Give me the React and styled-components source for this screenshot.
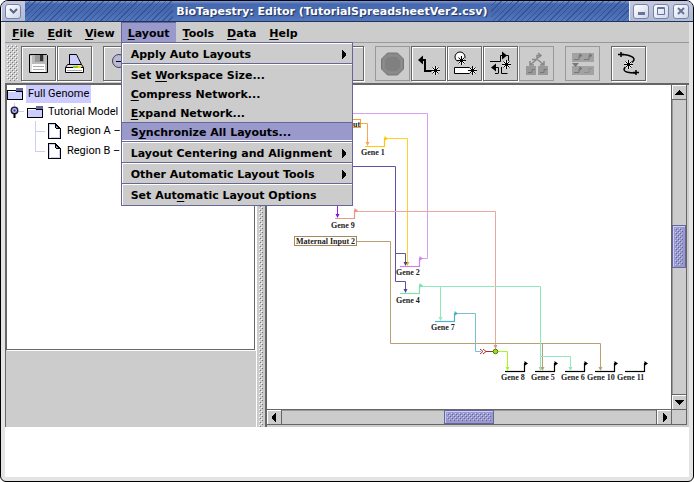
import React from "react";
import styled, { createGlobalStyle, css } from "styled-components";

const GlobalStyle = createGlobalStyle`
  * { box-sizing: border-box; }
  body { margin: 0; background: #fff; font-family: "Noto Sans", sans-serif; color: #000; }
  button { font: inherit; color: inherit; margin: 0; padding: 0; }
`;

const dot = (c) => `conic-gradient(from 270deg at 1px 1px, ${c} 90deg, transparent 0)`;
const bumps = (light, dark) => css`
  background-image: ${dot(light)}, ${dot(light)}, ${dot(dark)}, ${dot(dark)};
  background-size: 4px 4px;
  background-position: 0 0, 2px 2px, 1px 1px, 3px 3px;
`;

const Window = styled.div`
  height: 100vh;
  min-height: 400px;
  display: flex;
  flex-direction: column;
  border: 1px solid #000;
  border-radius: 8px 8px 6px 6px;
  background: #e4e4e4;
  overflow: hidden;
`;

const TitleBar = styled.header`
  flex: none;
  height: 21px;
  display: flex;
  align-items: stretch;
  border-bottom: 1px solid #223358;
  background: linear-gradient(#7d9bd6, #4669b0 3px, #4669b0 11px, #5478bf);
`;

const Stripes = styled.div`
  flex: ${(p) => p.$grow} 1 0;
  background: repeating-linear-gradient(135deg, transparent 0 3px, #2c4a8c 3px 4px);
  opacity: 0.7;
`;

const Title = styled.h1`
  margin: 0;
  padding: 0 3px;
  font: bold 11px/22px "DejaVu Sans", sans-serif;
  color: #fff;
  text-shadow: 1px 1px 1px #1d2f5c;
  white-space: nowrap;
`;

const WindowButtons = styled.div`
  display: flex;
  align-items: center;
  gap: 4px;
  padding: 0 4px 0 3px;
  background: linear-gradient(#c4c8e0, #b0bad4);
  border-left: 1px solid #e8ecf8;
`;

const WindowButton = styled.button`
  width: 16px;
  height: 15px;
  display: grid;
  place-items: center;
  border: 1px solid #7484a8;
  border-radius: 3px;
  background: linear-gradient(135deg, #fff, #d0d6e8);
`;

const Body = styled.div`
  flex: 1;
  min-height: 0;
  display: flex;
  flex-direction: column;
  margin: 0 4px 4px;
  background: #ccc;
`;

const MenuBar = styled.nav`
  flex: none;
  height: 21px;
  display: flex;
  border-bottom: 1px solid #999;
  font: bold 11px "DejaVu Sans", sans-serif;
`;

const MenuSlot = styled.div`
  position: relative;
  height: 20px;
`;

const MenuTitle = styled.button`
  height: 20px;
  padding: 1px 6px 0;
  line-height: 19px;
  border: 1px solid transparent;
  border-width: 1px 0 0 1px;
  background: ${(p) => (p.$open ? "#9999cc" : "transparent")};
  border-color: ${(p) => (p.$open ? "#666699" : "transparent")};
`;

const Key = styled.span`
  text-decoration: underline;
  text-underline-offset: 2px;
  text-decoration-thickness: 1px;
  text-decoration-skip-ink: none;
`;

const Dropdown = styled.div`
  position: absolute;
  z-index: 2;
  top: 20px;
  left: 0;
  width: 232px;
  padding: 1px 0;
  background: #ccc;
  border: 1px solid #666699;
  box-shadow: inset 1px 1px #fff;
`;

const Item = styled.button`
  width: 100%;
  height: 19px;
  display: flex;
  align-items: center;
  justify-content: space-between;
  padding: 2px 4px 0 9px;
  line-height: 15px;
  border: 0 solid;
  border-width: 1px 0;
  white-space: nowrap;
  border-color: ${(p) => (p.$active ? "#666699 transparent #fff" : "transparent")};
  background: ${(p) => (p.$active ? "#9999cc" : "transparent")};
`;

const Divider = styled.hr`
  height: 2px;
  margin: 0;
  border: 0;
  background: linear-gradient(#666699 1px, #fff 1px);
`;

const ToolBar = styled.div`
  flex: none;
  height: 42px;
  display: flex;
  align-items: center;
  gap: 1px;
  padding: 0 2px;
  border-bottom: 2px solid #666;
`;

const Grip = styled.div`
  width: 11px;
  height: 36px;
  margin-right: 2px;
  ${bumps("#fff", "#777")}
`;

const ToolButton = styled.button`
  width: 35px;
  height: 35px;
  display: grid;
  place-items: center;
  background: transparent;
  border: 1px solid ${(p) => (p.disabled ? "#999" : "#666")};
  box-shadow: ${(p) => (p.disabled ? "none" : "inset 1px 1px #fff, 1px 1px #fff")};
`;

const ToolGap = styled.span`
  width: 9px;
`;

const Workspace = styled.main`
  flex: 1;
  min-height: 0;
  display: grid;
  grid-template-columns: 252px 10px minmax(0, 1fr);
  grid-template-rows: minmax(0, 1fr);
  padding-right: 2px;
`;

const TreeColumn = styled.aside`
  display: flex;
  flex-direction: column;
  padding-right: 1px;
  border-left: 1px solid #666;
  border-right: 1px solid #fff;
`;

const TreePane = styled.div`
  height: 265px;
  background: #fff;
  border: 1px solid #666;
  border-top: 0;
  box-shadow: 1px 1px #fff;
  font: 11px Roboto, sans-serif;
  overflow: hidden;
`;

const Tree = styled.ul`
  list-style: none;
  margin: 0;
  padding: 0;
`;

const TreeRow = styled.li`
  height: ${(p) => (p.$leaf ? 20 : 18)}px;
  display: flex;
  align-items: center;
  gap: ${(p) => (p.$leaf ? 3 : 2)}px;
  padding-left: ${(p) => p.$indent}px;
  white-space: nowrap;
`;

const TreeLabel = styled.span`
  padding: 0 2px;
  line-height: 18px;
  background: ${(p) => (p.$selected ? "#ccccff" : "transparent")};
`;

const Splitter = styled.div`
  padding: 0 2px;
  border-right: 2px solid #666;
  background: #ccc;
`;

const SplitterBumps = styled.div`
  width: 4px;
  height: 100%;
  ${bumps("#fff", "#777")}
`;

const ScrollPane = styled.section`
  display: grid;
  grid-template-columns: minmax(0, 1fr) 16px;
  grid-template-rows: minmax(0, 1fr) 16px;
  margin-bottom: 2px;
`;

const Viewport = styled.div`
  background: #fff;
  overflow: hidden;
`;

const ScrollBar = styled.div`
  display: flex;
  flex-direction: ${(p) => (p.$vertical ? "column" : "row")};
  border: 1px solid #666;
  border-width: ${(p) => (p.$vertical ? "0 1px" : "1px 0")};
  box-shadow: inset 1px 1px #999;
`;

const ScrollArrow = styled.button`
  flex: none;
  width: ${(p) => (p.$vertical ? 14 : 15)}px;
  height: ${(p) => (p.$vertical ? 15 : 14)}px;
  display: grid;
  place-items: center;
  background: #ccc;
  border: 0 solid #666;
  border-width: ${(p) => (p.$end ? (p.$vertical ? "1px 0 0" : "0 0 0 1px") : p.$vertical ? "0 0 1px" : "0 1px 0 0")};
  box-shadow: inset 1px 1px #fff;
`;

const TrackSpace = styled.div`
  flex: ${(p) => p.$grow} 1 0;
`;

const Thumb = styled.div`
  flex: none;
  width: ${(p) => (p.$vertical ? 14 : 50)}px;
  height: ${(p) => (p.$vertical ? 43 : 14)}px;
  padding: 2px;
  background: #9999cc;
  border: 1px solid #666699;
  box-shadow: inset 1px 1px #ccccff;
`;

const ThumbBumps = styled.div`
  height: 100%;
  ${bumps("#ccccff", "#666699")}
`;

const Corner = styled.div`
  border: 1px solid #666;
`;

const Footer = styled.footer`
  flex: none;
  height: 50px;
  background: #fff;
`;

const Drawing = styled.svg`
  display: block;
`;

const Gene = styled.text`
  font: bold 8px "Liberation Serif", serif;
  fill: #222;
`;

const Arrow = ({ d }) => (
  <svg width="9" height="9" viewBox="0 0 9 9" shapeRendering="crispEdges">
    <path d={d} />
  </svg>
);
const RIGHT = "M3 0h1v1h1v1h1v1h1v3h-1v1h-1v1h-1v1h-1z";
const LEFT = "M6 0h-1v1h-1v1h-1v1h-1v3h1v1h1v1h1v1h1z";
const UP = "M4 2h1v1h1v1h1v1h1v1h1v1H0V6h1V5h1V4h1V3h1z";
const DOWN = "M0 2h9v1h-1v1h-1v1h-1v1h-1v1h-1v-1h-1v-1h-1v-1h-1v-1h-1z";

const Folder = () => (
  <svg width="17" height="14" viewBox="0 0 17 14" shapeRendering="crispEdges">
    <path d="M.5 3.500H8l1.500 1h6v8H.5z" fill="#ccccff" stroke="#000" />
    <path d="M9 1h7v3H9z" fill="#666699" />
    <path d="M1 4.500h7" stroke="#fff" />
  </svg>
);
const Page = () => (
  <svg width="14" height="17" viewBox="0 0 14 17" shapeRendering="crispEdges">
    <path d="M.5 .5h7l5 5v10h-12z" fill="#fff" stroke="#000" />
    <path d="M1.500 15V1.500h5M11.500 7v7.500h-9" fill="none" stroke="#ccccff" />
    <path d="M7 1l5 5M7.500 0v4h1v1h4" fill="none" stroke="#000" />
    <path d="M8 3h1v1h1v1h-2z" fill="#9999cc" />
  </svg>
);
const Handle = () => (
  <svg width="18" height="18" viewBox="0 0 18 18">
    <path d="M7.500 0v4M11 8.500h6" stroke="#ccccff" />
    <circle cx="7.500" cy="7.500" r="3.200" fill="#ccccff" stroke="#222244" strokeWidth="1.500" />
    <circle cx="7.500" cy="7.500" r="1.200" fill="#444477" />
    <path d="M7.500 10v5" stroke="#000" strokeWidth="2" />
  </svg>
);
const Branch = ({ last }) => (
  <svg width="11" height="20" viewBox="0 0 11 20" shapeRendering="crispEdges">
    <path d={last ? "M1.500 0v10.500h10" : "M1.500 0v20M1.500 10.500h10"} fill="none" stroke="#ccccff" />
  </svg>
);

const star = "M0 -4.500v9M-4.500 0h9M-3 -3l6 6M3 -3l-6 6";
const Glyph = ({ children }) => (
  <svg width="27" height="27" viewBox="0 0 27 27" fill="none" stroke="#000">
    {children}
  </svg>
);
const Star = ({ x, y }) => (
  <g transform={`translate(${x} ${y})`}>
    <path d={star} stroke="#eee" strokeWidth="2" />
    <path d={star} />
  </g>
);

const Save = () => (
  <Glyph>
    <path d="M4.500 4.500h17l1 1v17h-18z" fill="#bbb" />
    <path d="M6 6v15h15" stroke="#fff" />
    <path d="M10 5h9v7h-9z" fill="#999" stroke="none" />
    <path d="M15 5h3v6h-3z" fill="#333" stroke="none" />
    <path d="M7 14h13v8H7z" fill="#fff" stroke="none" />
    <path d="M8 16.500h11M8 19.500h11" stroke="#aaa" />
  </Glyph>
);
const Print = () => (
  <Glyph>
    <path d="M8.500 14.500v-10h7l2 4 3 6z" fill="#ccccff" />
    <path d="M6.500 14.500h14l2 3h-18z" fill="#ddd" />
    <path d="M4.500 17.500h18v5h-18z" fill="#fff" />
    <path d="M6 20.500h15" stroke="#aaa" />
    <path d="M12 17h5" stroke="#88cc22" strokeWidth="2" />
    <path d="M17 17h3" stroke="#ffd800" strokeWidth="2" />
  </Glyph>
);
const Zoom = ({ plus }) => (
  <Glyph>
    <circle cx="12" cy="11" r="6.500" fill="#b8b8d8" stroke="#444" />
    <path d={plus ? "M9 11.500h7M12.500 8v7" : "M9 11.500h7"} />
    <path d="M17 16l6 6" strokeWidth="2" />
  </Glyph>
);
const Blank = () => <Glyph />;
const Stop = () => (
  <Glyph>
    <path d="M8.500 3h10l6 6v10l-6 6h-10l-6-6V9z" fill="#888" stroke="#777" />
    <path d="M9.500 6h8l4.500 4.500v7L17.500 22h-8L5 17.500v-7z" fill="#808080" stroke="#919191" />
  </Glyph>
);
const AddGene = () => (
  <Glyph>
    <path d="M5 10h5M10 9v12M9 21h8" strokeWidth="2" />
    <path d="M3 10l5-4.500v9z" fill="#000" stroke="none" />
    <Star x={20.500} y={20.500} />
  </Glyph>
);
const AddNode = () => (
  <Glyph>
    <circle cx="9" cy="7" r="5" fill="#fff" />
    <path d="M3.500 17.500h17v6h-17z" fill="#fff" />
    <Star x={10.500} y={10.500} />
    <Star x={21.500} y={20.500} />
  </Glyph>
);
const AddLink = () => (
  <Glyph>
    <path d="M3 11.500h10.500V5.500h8v6M11.500 23.500V17.500h-5M8 23.500h3M14.500 17v6.500h6" />
    <path d="M15 1.500l5 4-5 4zM9 13.500l-5 4 5 4z" fill="#000" stroke="none" />
    <Star x={19.500} y={14.500} />
  </Glyph>
);
const Propagate = () => (
  <Glyph>
    <path d="M3 16h10v9H3zM15 16h10v9H15z" fill="#999" stroke="none" />
    <path d="M9 9.500h5V5.500h4M15 3l3 2.500-3 2.500M13 10l-6 5M15 10l6 5M7 11v4h4M21 11v4h-4" stroke="#888" strokeWidth="1.500" />
    <path d="M5 22.500h4v-3h3M17 22.500h4v-3h3" stroke="#777" />
  </Glyph>
);
const Rows = () => (
  <Glyph>
    <path d="M3 3h22v9H3zM3 16h22v9H3z" fill="#a2a2a2" stroke="none" />
    <path d="M5 9.500h5v-4h3M15 9.500h5v-4h3M5 22.500h5v-4h3M10 3.500l3 2-3 2M20 3.500l3 2-3 2M10 16.500l3 2-3 2" stroke="#777" />
    <path d="M15 22.500h5v-4h3" stroke="#8e8e8e" />
    <path d="M3 13h7l-3.500 4z" fill="#777" stroke="none" />
  </Glyph>
);
const Curve = () => (
  <Glyph>
    <path d="M5 4.500C10 4 19 6 19 9.500c0 4-10 6-10 10 0 3 5 3.500 12 3.500" strokeWidth="1.500" />
    <path d="M3 4.500h6M6 2v5M18 22.500h6M21 20v5" strokeWidth="1.500" />
    <Star x={13.500} y={14.500} />
  </Glyph>
);

const wires = [
  ["#d8a0f0", "M340 113.500H427.500V258.500H420.500"],
  ["#f8a850", "M361 123.500H367.500V144"],
  ["#ffd030", "M385 138.500H407.500V264"],
  ["#6050a8", "M340 166.500H395.500V281.500H405.500V291M395.500 253.500H405.500V264"],
  ["#9020f0", "M337.500 200V216"],
  ["#e8a8a0", "M355 211.500H495.500V349"],
  ["#b8a070", "M357 241.500H390.500V343.500H600.500V370M542.500 343.500V370"],
  ["#90e8c0", "M420 286.500H540.500V370M440.500 286.500V319M540.500 356.500H570.500V370"],
  ["#78c0d0", "M455 313.500H475.500V351.500H481"],
  ["#a83030", "M486 351.500H493"],
  ["#a8f820", "M498 351.500H507.500V370"],
];
const genes = [
  ["Gene 1", 361, 155, 366, 146, "#ffc800"],
  ["Gene 9", 331, 228, 336, 218, "#e89888"],
  ["Gene 2", 396, 275, 401, 266, "#d080e8"],
  ["Gene 4", 396, 303, 401, 293, "#80e0b0"],
  ["Gene 7", 431, 330, 436, 321, "#50b0c8"],
  ["Gene 8", 501, 380, 506, 371, "#000"],
  ["Gene 5", 531, 380, 536, 371, "#000"],
  ["Gene 6", 561, 380, 566, 371, "#000"],
  ["Gene 10", 587, 380, 596, 371, "#000"],
  ["Gene 11", 617, 380, 626, 371, "#000"],
];
const tips = [
  [367.5, 146, "#f8a850"],
  [407.5, 266, "#f0b820"],
  [405.5, 266, "#504098"],
  [405.5, 293, "#504098"],
  [337.5, 218, "#8010e0"],
  [495.5, 349, "#e09088"],
  [440.5, 321, "#90e8c0"],
  [507.5, 371, "#a8f820"],
  [540.5, 371, "#90e8c0"],
  [542.5, 371, "#b8a070"],
  [570.5, 371, "#90e8c0"],
  [600.5, 371, "#b8a070"],
];

const Network = () => (
  <Drawing width="404" height="324" viewBox="267 85 404 324" fill="none">
    {wires.map(([c, d]) => (
      <path key={d} d={d} stroke={c} />
    ))}
    {genes.map(([name, tx, ty, x, y, c]) => (
      <g key={name}>
        <path d={`M${x - 1} ${y + 0.5}h20`} stroke={c} strokeWidth="1.200" />
        <path d={`M${x + 18.5} ${y + 1}v-8.500h2`} stroke={c} strokeWidth="1.200" />
        <path d={`M${x + 18.5} ${y - 10}l3.500 2.500-3.500 2.500z`} fill={c} />
        <Gene x={tx} y={ty}>{name}</Gene>
      </g>
    ))}
    {tips.map(([x, y, c]) => (
      <path key={`${x}-${y}`} d={`M${x - 2} ${y - 4}h4l-2 4z`} fill={c} />
    ))}
    <path d="M480 349l3 2.500-3 2.500M483 349l3 2.500-3 2.500" stroke="#a83030" />
    <circle cx="495.500" cy="351.500" r="2.300" fill="#90e800" stroke="#557722" />
    <rect x="304.500" y="119.500" width="56" height="8" stroke="#f8a020" />
    <Gene x="307" y="127">Maternal Input</Gene>
    <rect x="294.500" y="236.500" width="62" height="9" stroke="#a88858" />
    <Gene x="296" y="244">Maternal Input 2</Gene>
  </Drawing>
);

const items = [
  ["", "", "Apply Auto Layouts", "sub"],
  null,
  ["Set ", "W", "orkspace Size..."],
  ["", "C", "ompress Network..."],
  ["", "E", "xpand Network..."],
  ["S", "y", "nchronize All Layouts...", "active"],
  null,
  ["", "", "Layout Centering and Alignment", "sub"],
  null,
  ["", "", "Other Automatic Layout Tools", "sub"],
  null,
  ["Set Aut", "o", "matic Layout Options"],
];

const tools = [
  ["Save", Save], ["Print", Print], null,
  ["Zoom out", Zoom], ["Zoom in", () => <Zoom plus />], ["Zoom to fit", Zoom], ["Zoom to selection", Zoom], null,
  ["Search", Zoom], ["Select all", Zoom], ["Clear", Blank], null,
  ["Cancel", Stop, true], ["Add gene", AddGene], ["Add node", AddNode], ["Add link", AddLink],
  ["Propagate down", Propagate, true], null,
  ["Pull down", Rows, true], null,
  ["Relayout links", Curve],
];

export default function App() {
  return (
    <>
      <GlobalStyle />
      <Window>
        <TitleBar>
          <WindowButtons>
            <WindowButton aria-label="Window menu">
              <svg width="9" height="8" viewBox="0 0 9 8"><path d="M1 2l3.500 3.500L8 2" fill="none" stroke="#566488" strokeWidth="2" /></svg>
            </WindowButton>
          </WindowButtons>
          <Stripes $grow={15} />
          <Title>BioTapestry: Editor (TutorialSpreadsheetVer2.csv)</Title>
          <Stripes $grow={14} />
          <WindowButtons>
            <WindowButton aria-label="Minimize">
              <svg width="8" height="8"><path d="M1 5h7v3H1z" fill="#66749c" /></svg>
            </WindowButton>
            <WindowButton aria-label="Maximize">
              <svg width="8" height="8"><path d="M.5 .5h7v7h-7zM0 1.500h8" fill="none" stroke="#66749c" /></svg>
            </WindowButton>
            <WindowButton aria-label="Close">
              <svg width="8" height="8"><path d="M1 1l6 6M7 1L1 7" stroke="#66749c" strokeWidth="2" /></svg>
            </WindowButton>
          </WindowButtons>
        </TitleBar>
        <Body>
          <MenuBar>
            {["File", "Edit", "View", "Layout", "Tools", "Data", "Help"].map((name) => (
              <MenuSlot key={name}>
                <MenuTitle $open={name === "Layout"}>
                  <Key>{name[0]}</Key>{name.slice(1)}
                </MenuTitle>
                {name === "Layout" && (
                  <Dropdown role="menu">
                    {items.map((it, i) =>
                      it ? (
                        <Item key={i} role="menuitem" $active={it[3] === "active"}>
                          <span>{it[0]}<Key>{it[1]}</Key>{it[2]}</span>
                          {it[3] === "sub" && <Arrow d={RIGHT} />}
                        </Item>
                      ) : (
                        <Divider key={i} />
                      )
                    )}
                  </Dropdown>
                )}
              </MenuSlot>
            ))}
          </MenuBar>
          <ToolBar>
            <Grip />
            {tools.map((t, i) => {
              if (!t) return <ToolGap key={i} />;
              const [label, Icon, off] = t;
              return (
                <ToolButton key={i} aria-label={label} disabled={!!off}><Icon /></ToolButton>
              );
            })}
          </ToolBar>
          <Workspace>
            <TreeColumn>
              <TreePane>
                <Tree>
                  <TreeRow $indent={0}><Folder /><TreeLabel $selected>Full Genome</TreeLabel></TreeRow>
                  <TreeRow $indent={0}><Handle /><Folder /><TreeLabel>Tutorial Model</TreeLabel></TreeRow>
                  <TreeRow $leaf $indent={27}><Branch /><Page /><TreeLabel>Region A –</TreeLabel></TreeRow>
                  <TreeRow $leaf $indent={27}><Branch last /><Page /><TreeLabel>Region B –</TreeLabel></TreeRow>
                </Tree>
              </TreePane>
            </TreeColumn>
            <Splitter><SplitterBumps /></Splitter>
            <ScrollPane>
              <Viewport><Network /></Viewport>
              <ScrollBar $vertical>
                <ScrollArrow $vertical aria-label="Scroll up"><Arrow d={UP} /></ScrollArrow>
                <TrackSpace $grow={125} />
                <Thumb $vertical><ThumbBumps /></Thumb>
                <TrackSpace $grow={126} />
                <ScrollArrow $vertical $end aria-label="Scroll down"><Arrow d={DOWN} /></ScrollArrow>
              </ScrollBar>
              <ScrollBar>
                <ScrollArrow aria-label="Scroll left"><Arrow d={LEFT} /></ScrollArrow>
                <TrackSpace $grow={161} />
                <Thumb><ThumbBumps /></Thumb>
                <TrackSpace $grow={162} />
                <ScrollArrow $end aria-label="Scroll right"><Arrow d={RIGHT} /></ScrollArrow>
              </ScrollBar>
              <Corner />
            </ScrollPane>
          </Workspace>
          <Footer />
        </Body>
      </Window>
    </>
  );
}
